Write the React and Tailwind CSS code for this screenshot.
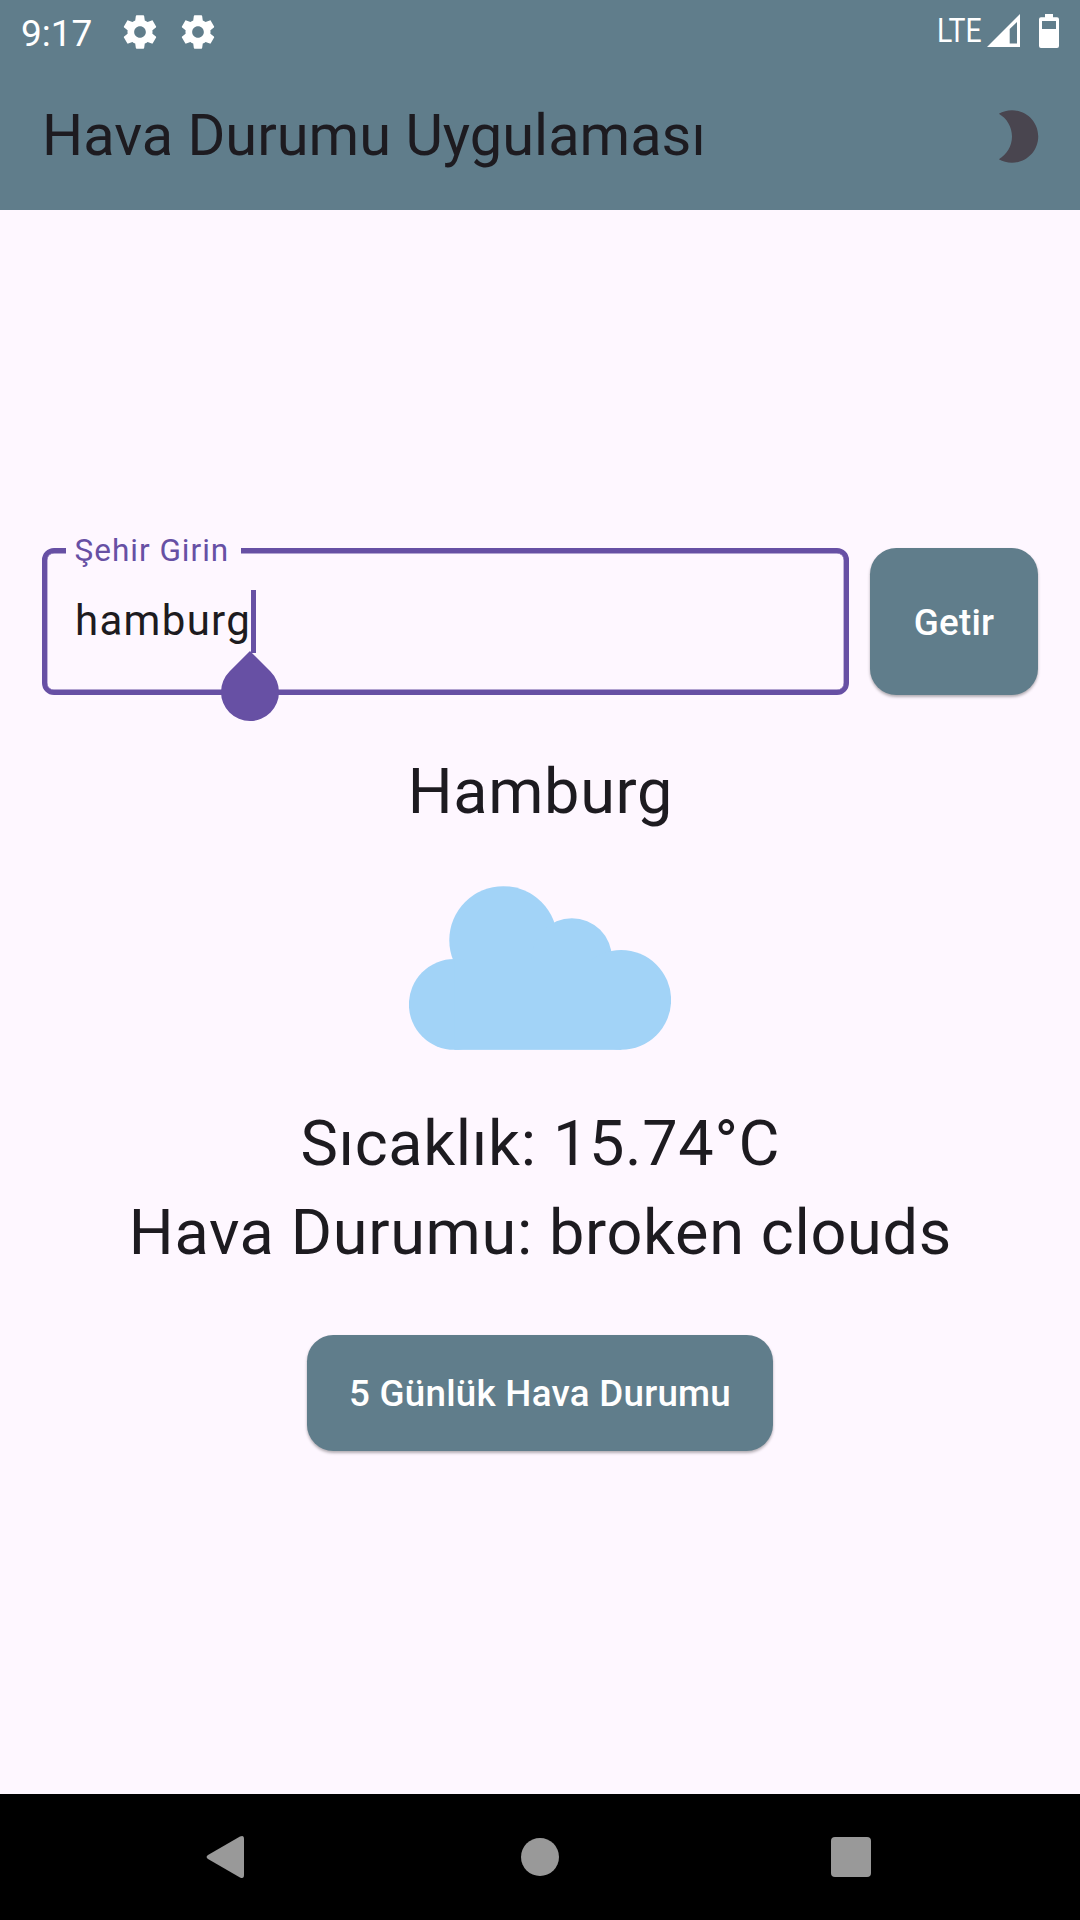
function GearIcon() {
  return (
    <svg viewBox="0 0 24 24" className="h-[40px] w-[40px] fill-white">
      <path d="M19.43 12.98c.04-.32.07-.64.07-.98s-.03-.66-.07-.98l2.11-1.65c.19-.15.24-.42.12-.64l-2-3.46c-.12-.22-.39-.3-.61-.22l-2.49 1c-.52-.4-1.08-.73-1.69-.98l-.38-2.65C14.46 2.18 14.25 2 14 2h-4c-.25 0-.46.18-.49.42l-.38 2.65c-.61.25-1.17.59-1.69.98l-2.49-1c-.23-.09-.49 0-.61.22l-2 3.46c-.13.22-.07.49.12.64l2.11 1.65c-.04.32-.07.65-.07.98s.03.66.07.98l-2.11 1.65c-.19.15-.24.42-.12.64l2 3.46c.12.22.39.3.61.22l2.49-1c.52.4 1.08.73 1.69.98l.38 2.65c.03.24.24.42.49.42h4c.25 0 .46-.18.49-.42l.38-2.65c.61-.25 1.17-.59 1.69-.98l2.49 1c.23.09.49 0 .61-.22l2-3.46c.12-.22.07-.49-.12-.64l-2.11-1.65zM12 15.5c-1.93 0-3.5-1.57-3.5-3.5s1.57-3.5 3.5-3.5 3.5 1.57 3.5 3.5-1.57 3.5-3.5 3.5z" />
    </svg>
  );
}

function SignalIcon() {
  return (
    <svg viewBox="0 0 33 33" className="h-[33px] w-[33px] fill-white">
      <path fillRule="evenodd" d="M0 33L33 0V33ZM22.700 15V29.500H30V8Z" />
    </svg>
  );
}

function BatteryIcon() {
  return (
    <svg viewBox="0 0 20 34" className="h-[34px] w-[20px] fill-white">
      <path
        fillRule="evenodd"
        d="M6 0H14V3.3H18Q20 3.3 20 5.3V32Q20 34 18 34H2Q0 34 0 32V5.3Q0 3.3 2 3.3H6ZM3 7V15H17V7Z"
      />
    </svg>
  );
}

function StatusBar() {
  return (
    <div className="flex h-[63px] items-start justify-between pl-[21px] pr-[21px] text-white">
      <div className="flex">
        <span className="w-[99px] pt-[2px] text-[37px] leading-[63px]">9:17</span>
        <div className="flex gap-[18px] pt-[12px]">
          <GearIcon />
          <GearIcon />
        </div>
      </div>
      <div className="flex pt-[14px]">
        <span className="w-[50px] origin-left scale-x-[0.86] text-[33px] leading-[34px]">LTE</span>
        <SignalIcon />
        <div className="ml-[19px]">
          <BatteryIcon />
        </div>
      </div>
    </div>
  );
}

function AppBar() {
  return (
    <div className="flex h-[147px] items-center justify-between pl-[42px] pr-[31.5px]">
      <h1 className="pb-[2px] text-[57.75px] leading-[73px]">Hava Durumu Uygulaması</h1>
      <svg viewBox="0 0 24 24" className="h-[63px] w-[63px] fill-[#49454f]">
        <path d="M9.900 2c-1.82 0-3.53.5-5 1.35C7.890 5.08 9.900 8.3 9.900 12s-2.01 6.92-5 8.65C6.370 21.5 8.080 22 9.900 22c5.52 0 10-4.48 10-10S15.420 2 9.900 2z" />
      </svg>
    </div>
  );
}

function CityField() {
  return (
    <div className="relative flex h-[147px] w-[807px] items-center rounded-[12px] border-[5px] border-[#6750a4] pl-[28px] shadow-[inset_0_0_0_0.4px_#6750a4]">
      <span className="absolute -top-[22px] left-[18.5px] h-[36px] w-[175.5px] bg-[#fef7ff] pl-[9px] text-[31.5px] leading-[40px] tracking-[1px] text-[#6750a4]">
        Şehir Girin
      </span>
      <span className="pb-[2px] text-[42px] leading-[63px] tracking-[1.3125px]">hamburg</span>
      <span className="absolute left-[203.75px] top-[37px] h-[63px] w-[5.25px] bg-[#6750a4]" />
      <span className="absolute left-[174px] top-[110px] h-[58px] w-[58px] rotate-45 rounded-full rounded-tl-none bg-[#6750a4]" />
    </div>
  );
}

function CloudIcon() {
  return (
    <svg viewBox="0 0 262 163.7" className="mt-[50px] h-[164px] w-[262px] fill-[#a2d3f7]">
      <circle cx="94.3" cy="54" r="54" />
      <circle cx="162.9" cy="72" r="40" />
      <circle cx="212.2" cy="113.8" r="49.9" />
      <circle cx="45.3" cy="118.3" r="45.4" />
      <rect x="45.3" y="73" width="167" height="90.7" />
    </svg>
  );
}

const buttonClass =
  "flex items-center justify-center rounded-[26.25px] bg-[#607d8b] pt-[2px] text-[36.75px] font-medium leading-[52px] tracking-[0.2625px] text-white shadow-[0_2px_3px_rgba(0,0,0,0.3)]";

function NavBar() {
  return (
    <div className="flex h-[126px] items-center bg-black pl-[206px]">
      <svg viewBox="0 0 38 42" className="h-[42px] w-[38px] fill-[#999999]">
        <path d="M34 .6Q38-1.200 38 3V39Q38 43.200 34 41.400L2 23Q-.8 21 2 19Z" />
      </svg>
      <div className="ml-[277px] h-[38px] w-[38px] rounded-full bg-[#999999]" />
      <div className="ml-[272px] h-[40px] w-[40px] rounded-[4px] bg-[#999999]" />
    </div>
  );
}

export default function App() {
  return (
    <div className="flex h-[1920px] w-[1080px] flex-col overflow-hidden bg-[#fef7ff] font-['Roboto',sans-serif] text-[#1d1b20]">
      <header className="h-[210px] bg-[#607d8b]">
        <StatusBar />
        <AppBar />
      </header>
      <main className="flex flex-1 flex-col items-center pt-[338px]">
        <div className="flex gap-[21px]">
          <CityField />
          <button className={`${buttonClass} h-[147px] w-[168px]`}>Getir</button>
        </div>
        <p className="mt-[52px] pl-[0.65625px] text-[63px] leading-[89px] tracking-[0.65625px]">Hamburg</p>
        <CloudIcon />
        <p className="mt-[49px] pl-[0.65625px] text-[63px] leading-[89px] tracking-[0.65625px]">Sıcaklık: 15.74°C</p>
        <p className="pl-[0.65625px] text-[63px] leading-[89px] tracking-[0.65625px]">Hava Durumu: broken clouds</p>
        <button className={`${buttonClass} mt-[58px] h-[116px] w-[466px]`}>5 Günlük Hava Durumu</button>
      </main>
      <NavBar />
    </div>
  );
}
